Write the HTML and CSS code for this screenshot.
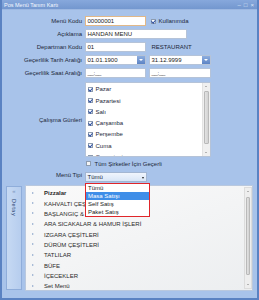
FILE: index.html
```html
<!DOCTYPE html>
<html>
<head>
<meta charset="utf-8">
<link rel="stylesheet" href="styles.css">
</head>
<body>
<div class="window">
  <div class="titlebar">
    <span class="title">Pos Menü Tanım Kartı</span>
    <span class="controls"><span>‒</span><span>□</span><span>×</span></span>
  </div>
  <div class="form">
    <div class="row">
      <label class="lbl">Menü Kodu</label>
      <div class="fields">
        <div class="input w61 focused">00000001</div>
        <span class="chk checked"></span><span class="txt">Kullanımda</span>
      </div>
    </div>
    <div class="row">
      <label class="lbl">Açıklama</label>
      <div class="fields"><div class="input w102">HANDAN MENU</div></div>
    </div>
    <div class="row">
      <label class="lbl">Departman Kodu</label>
      <div class="fields"><div class="input w61">01</div><span class="txt dep">RESTAURANT</span></div>
    </div>
    <div class="row">
      <label class="lbl">Geçerlilik Tarih Aralığı</label>
      <div class="fields gap3">
        <div class="input w61 date">01.01.1900<span class="btn"></span></div>
        <div class="input w62 date">31.12.9999<span class="btn"></span></div>
      </div>
    </div>
    <div class="row">
      <label class="lbl">Geçerlilik Saat Aralığı</label>
      <div class="fields gap3">
        <div class="input w61 time">__:__</div>
        <div class="input w62 time">__:__</div>
      </div>
    </div>
    <div class="row listrow">
      <label class="lbl">Çalışma Günleri</label>
      <div class="fields">
        <div class="listbox">
          <div class="items">
            <div class="item"><span class="chk checked"></span>Pazar</div>
            <div class="item"><span class="chk checked"></span>Pazartesi</div>
            <div class="item"><span class="chk checked"></span>Salı</div>
            <div class="item"><span class="chk checked"></span>Çarşamba</div>
            <div class="item"><span class="chk checked"></span>Perşembe</div>
            <div class="item"><span class="chk checked"></span>Cuma</div>
            <div class="item"><span class="chk checked"></span>Cumartesi</div>
          </div>
          <div class="vscroll"><span class="up"></span><span class="thumb"></span><span class="down"></span></div>
        </div>
      </div>
    </div>
    <div class="row allrow">
      <span class="lbl"></span>
      <div class="fields"><span class="chk"></span><span class="txt">Tüm Şirketler İçin Geçerli</span></div>
    </div>
    <div class="row">
      <label class="lbl">Menü Tipi</label>
      <div class="fields"><div class="combo">Tümü<span class="arrow"></span></div></div>
    </div>
  </div>
  <div class="bottom">
    <div class="detay"><span class="chev">«</span><span class="vtext">Detay</span></div>
    <div class="tree">
      <div class="nodes">
        <div class="node first">Pizzalar</div>
        <div class="node">KAHVALTI ÇEŞİTLERİ</div>
        <div class="node">BAŞLANGIÇ &amp; SALATALAR</div>
        <div class="node">ARA SICAKALAR &amp; HAMUR İŞLERİ</div>
        <div class="node">IZGARA ÇEŞİTLERİ</div>
        <div class="node">DÜRÜM ÇEŞİTLERİ</div>
        <div class="node">TATLILAR</div>
        <div class="node">BÜFE</div>
        <div class="node">İÇECEKLER</div>
        <div class="node">Set Menü</div>
      </div>
      <div class="tscroll"><span class="up"></span><span class="thumb"></span><span class="down"></span></div>
    </div>
  </div>
  <div class="dropdown">
    <div class="opt">Tümü</div>
    <div class="opt sel">Masa Satışı</div>
    <div class="opt">Self Satış</div>
    <div class="opt">Paket Satış</div>
  </div>
</div>
</body>
</html>
```
FILE: styles.css
```css
* { box-sizing: border-box; }
html, body { margin: 0; padding: 0; }
body { font-family: "Liberation Sans", Arial, sans-serif; font-size: 6px; color: #1c2838; }

.window {
  position: relative;
  width: 259px; height: 300px;
  background: #a8c3ea;
  border: 2px solid #5a82c2;
  border-top: none;
  overflow: hidden;
}
.titlebar {
  height: 10px;
  background: linear-gradient(#87a8dc, #7397cf);
  display: flex; align-items: center; justify-content: space-between;
  padding: 0 3px 0 2px;
  color: #fff;
  border-bottom: 1px solid #9db8e2;
}
.title { font-size: 5.5px; color: #f4f8ff; }
.controls { display: flex; gap: 3px; font-size: 6px; color: #dfe8f7; }

.form { display: flex; flex-direction: column; gap: 3px; padding-top: 6px; }
.row { display: flex; align-items: center; height: 10px; }
.lbl { width: 80px; text-align: right; padding-right: 0; margin-right: 2.5px; flex: none; white-space: nowrap; }
.fields { display: flex; align-items: center; }
.gap3 { gap: 3px; }

.input {
  position: relative;
  height: 10px;
  background: #fff;
  border: 1px solid #b5c3d8;
  padding-left: 2px;
  display: flex; align-items: center;
  color: #1a1a1a;
  white-space: nowrap;
}
.w61 { width: 61px; }
.w62 { width: 62px; }
.w102 { width: 102px; }
.focused { border-color: #e1b888; }
.date .btn {
  position: absolute; right: 0; top: 0; width: 8px; height: 8px;
  background: linear-gradient(#8eaedf, #5c83c4);
}
.date .btn::after {
  content: ""; position: absolute; left: 2px; top: 3px;
  border-left: 2px solid transparent; border-right: 2px solid transparent; border-top: 2px solid #fff;
}
.time { color: #333; letter-spacing: -0.3px; }

.chk {
  display: inline-block; position: relative;
  width: 5px; height: 5px; flex: none;
  background: #fff; border: 1px solid #8d9cb0;
  margin-left: 5px; margin-right: 3px;
}
.chk.checked::after {
  content: ""; position: absolute; left: 0.5px; top: -1px;
  width: 1.5px; height: 3px;
  border-right: 1px solid #2c4ea0; border-bottom: 1px solid #2c4ea0;
  transform: rotate(40deg);
}
.txt { color: #1c2838; white-space: nowrap; }
.dep { margin-left: 6px; }

.listrow { height: 75px; margin-top: 1px; }
.listbox {
  width: 126px; height: 75px;
  background: #fff; border: 1px solid #b5c3d8;
  display: flex; overflow: hidden;
}
.items { flex: 1; padding-top: 0.6px; overflow: hidden; }
.item { height: 11.3px; display: flex; align-items: center; white-space: nowrap; }
.item .chk { margin-left: 2px; margin-right: 3px; }
.vscroll, .tscroll {
  width: 8px; flex: none; position: relative;
  background: #f0f0f0; border-left: 1px solid #e3e3e3;
}
.vscroll .up, .tscroll .up, .vscroll .down, .tscroll .down {
  position: absolute; left: 2px;
  border-left: 1.5px solid transparent; border-right: 1.5px solid transparent;
}
.vscroll .up, .tscroll .up { top: 3px; border-bottom: 1.5px solid #777; }
.vscroll .down, .tscroll .down { bottom: 3px; border-top: 1.5px solid #777; }
.vscroll .thumb, .tscroll .thumb {
  position: absolute; left: 1px; right: 1px;
  background: linear-gradient(90deg, #e2e2e2, #d2d2d2); border: 1px solid #b9b9b9; border-radius: 1px;
}
.vscroll .thumb { top: 8px; height: 53px; }

.allrow { height: 7px; margin-top: 0px; }
.allrow .chk { margin-left: 1.5px; margin-right: 3.5px; background: #f4f4f4; }

.combo {
  position: relative; width: 62px; height: 10px;
  border: 1px solid #a3b6d2;
  background: linear-gradient(#f0f5fd, #d9e6f7);
  padding-left: 2px; display: flex; align-items: center;
  margin-top: 3px;
}
.combo .arrow {
  position: absolute; right: 2px; top: 4px;
  border-left: 1.5px solid transparent; border-right: 1.5px solid transparent; border-top: 2px solid #222;
}

.bottom { display: flex; margin: 5px 0 0 4px; gap: 3px; height: 106px; }
.detay {
  width: 16px; height: 104px; margin-top: 1px;
  background: linear-gradient(90deg, #c6d9f3, #b6cdee);
  border: 1px solid #8fadda;
  display: flex; flex-direction: column; align-items: center;
  color: #3a5a8c;
}
.chev { font-size: 6px; line-height: 6px; margin-top: 1px; color: #7b94bc; }
.vtext { writing-mode: vertical-rl; font-size: 5.5px; letter-spacing: 0.6px; margin-top: 5px; color: #2c4773; }
.tree {
  width: 228px; height: 106px;
  background: linear-gradient(160deg, #fafafa, #eceef0);
  border: 1px solid #b9c8de;
  display: flex;
}
.nodes { flex: 1; padding-top: 2px; }
.node {
  height: 10.35px; display: flex; align-items: center;
  padding-left: 18px; position: relative;
  color: #2a2a2a; white-space: nowrap;
}
.node::before {
  content: ""; position: absolute; left: 6px; top: 3.5px;
  border-top: 1.5px solid transparent; border-bottom: 1.5px solid transparent; border-left: 2px solid #8fa8cc;
}
.node.first { font-weight: bold; }
.tscroll { background: #eeeeee; border: 1px solid #dcdcdc; margin: 1px 0 1px 0; }
.tscroll .thumb { top: 9px; height: 78px; }

.dropdown {
  position: absolute; left: 83px; top: 183px;
  width: 65px; height: 34px;
  background: #fff; border: 1.5px solid #e0262a;
  padding-top: 0.5px;
}
.opt { height: 7.8px; display: flex; align-items: center; padding-left: 2px; color: #222; white-space: nowrap; }
.opt.sel { background: #3f8ee8; color: #fff; }
```
